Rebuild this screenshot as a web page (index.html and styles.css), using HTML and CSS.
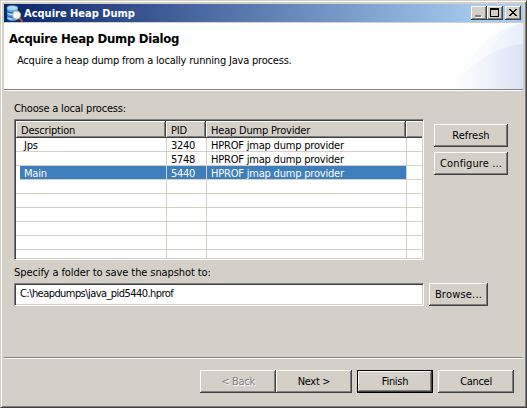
FILE: index.html
```html
<!DOCTYPE html>
<html lang="en">
<head>
<meta charset="utf-8">
<title>Acquire Heap Dump</title>
<link rel="stylesheet" href="styles.css">
</head>
<body>
<div class="window">
  <header class="titlebar">
    <svg class="app-icon" width="17" height="17" viewBox="0 0 16 16">
      <path d="M1 2.500v10c0 1.700 2.300 2.500 5 2.500s5-.8 5-2.500v-10z" fill="#5da7e2"/>
      <path d="M1 5.500c1 2.600 9 2.600 10 0M1 9.500c1 2.600 9 2.600 10 0" fill="none" stroke="#2869b5" stroke-width="1.300"/>
      <path d="M2 7.800c1 1 4 1.400 5 1M2 11.800c1 1 3 1.400 4 1.200" fill="none" stroke="#b6e1fa"/>
      <ellipse cx="6" cy="2.800" rx="5" ry="2.200" fill="#aadcf8" stroke="#64a8df" stroke-width=".7"/>
      <path d="M12.600 12.300l3 3.200" stroke="#a45d24" stroke-width="1.900"/>
      <circle cx="10" cy="9.500" r="3.700" fill="#edf7ff" stroke="#d1b17e" stroke-width="1.100"/>
    </svg>
    <h1 class="title">Acquire Heap Dump</h1>
    <div class="controls">
      <span class="ctl"><svg width="16" height="14" shape-rendering="crispEdges"><path d="M5 10h6v2H5z" fill="#fff"/><path d="M4 9h6v2H4z" fill="#808080"/></svg></span>
      <span class="ctl"><svg width="16" height="14" shape-rendering="crispEdges"><path d="M3 2h9v9H3zM4 4v6h7V4z" fill="#000" fill-rule="evenodd"/></svg></span>
      <span class="ctl close"><svg width="16" height="14" shape-rendering="crispEdges"><path d="M4 3h2v1h1v1h2V4h1V3h2v1h-1v1h-1v1H9v1h1v1h1v1h1v1h-2V9H9V8H7v1H6v1H4V9h1V8h1V7h1V6H6V5H5V4H4z" fill="#000"/></svg></span>
    </div>
  </header>

  <section class="banner">
    <svg class="swoosh" width="83" height="66" viewBox="0 0 83 66">
      <defs>
        <linearGradient id="g1" x1="0" x2="1"><stop offset="0" stop-color="#fff"/><stop offset=".5" stop-color="#f8fafe"/><stop offset="1" stop-color="#eef3fc"/></linearGradient>
        <linearGradient id="g2" x1="0" x2="1"><stop offset="0" stop-color="#f7f9fe"/><stop offset="1" stop-color="#e7eefb"/></linearGradient>
        <linearGradient id="g3" x1="0" x2="1"><stop offset="0" stop-color="#fff"/><stop offset=".45" stop-color="#f1f4fc"/><stop offset="1" stop-color="#dbe2f6"/></linearGradient>
      </defs>
      <path d="M11 66C26 35 51 5 83 0v66z" fill="url(#g1)"/>
      <path d="M41 46C50 22 64 4 83 0v46z" fill="url(#g2)"/>
      <path d="M11 66C27 43 55 23 83 21v45z" fill="url(#g3)"/>
    </svg>
    <h2 class="heading">Acquire Heap Dump Dialog</h2>
    <p class="desc">Acquire a heap dump from a locally running Java process.</p>
  </section>

  <main class="content">
    <label class="label choose">Choose a local process:</label>
    <div class="process-row">
      <div class="table">
        <div class="thead">
          <span class="th">Description</span><span class="th">PID</span><span class="th">Heap Dump Provider</span><span class="th last"></span>
        </div>
        <div class="tr"><span class="name">Jps</span><span class="pid">3240</span><span>HPROF jmap dump provider</span><span></span></div>
        <div class="tr"><span class="name"></span><span class="pid">5748</span><span>HPROF jmap dump provider</span><span></span></div>
        <div class="tr selected"><span class="name">Main</span><span class="pid">5440</span><span>HPROF jmap dump provider</span><span></span></div>
        <div class="tr"><span></span><span></span><span></span><span></span></div>
        <div class="tr"><span></span><span></span><span></span><span></span></div>
        <div class="tr"><span></span><span></span><span></span><span></span></div>
        <div class="tr"><span></span><span></span><span></span><span></span></div>
        <div class="tr"><span></span><span></span><span></span><span></span></div>
        <div class="tr"><span></span><span></span><span></span><span></span></div>
      </div>
      <div class="side">
        <button class="btn">Refresh</button>
        <button class="btn wide-text">Configure ...</button>
      </div>
    </div>
    <label class="label specify">Specify a folder to save the snapshot to:</label>
    <div class="path-row">
      <div class="field">C:\heapdumps\java_pid5440.hprof</div>
      <button class="btn browse">Browse...</button>
    </div>
  </main>

  <footer class="footer">
    <button class="btn disabled">&lt; Back</button>
    <button class="btn">Next &gt;</button>
    <button class="btn default">Finish</button>
    <button class="btn cancel">Cancel</button>
  </footer>
</div>
</body>
</html>
```
FILE: styles.css
```css
* { box-sizing: border-box; }

body {
  margin: 0;
  background: #d4d0c8;
  color: #000;
  font: 11px/14px "DejaVu Sans Condensed", "DejaVu Sans", sans-serif;
  letter-spacing: -0.2px;
}

.window {
  width: 527px;
  height: 408px;
  padding: 3px 2px 2px 3px;
  border: 1px solid #d4d0c8;
  border-right-color: #404040;
  border-bottom-color: #404040;
  box-shadow: inset 1px 1px #fff, inset -1px -1px #808080;
  display: flex;
  flex-direction: column;
}

.titlebar {
  width: 519px;
  height: 18px;
  display: flex;
  align-items: center;
  padding: 0 2px;
  background: linear-gradient(90deg, #0a246a, #a6caf0 92%);
}

.app-icon { margin-top: 1px; }

.title {
  margin: 0 auto 0 1px;
  padding-top: 2px;
  color: #fff;
  font-size: 11px;
  font-weight: bold;
  letter-spacing: 0;
}

.controls { display: flex; }

.ctl {
  width: 16px;
  height: 14px;
  background: #d4d0c8;
  box-shadow: inset -1px -1px #404040, inset 1px 1px #fff, inset -2px -2px #808080;
}

.ctl svg { display: block; }
.close { margin-left: 2px; }

.banner {
  position: relative;
  width: 519px;
  height: 68px;
  margin-top: 1px;
  padding: 8px 0 0 5px;
  background: #fff;
  border-bottom: 1px solid #fff;
  box-shadow: inset 0 -1px #808080;
}

.swoosh { position: absolute; right: 0; top: 0; }

.heading {
  position: relative;
  margin: 0;
  font-size: 13px;
  line-height: 16px;
  letter-spacing: -0.3px;
}

.desc { position: relative; margin: 7px 0 0 8px; }

.content { padding: 11px 0 0 10px; }
.label { display: block; }
.choose { height: 17px; }

.process-row { display: flex; gap: 10px; }

.table {
  width: 410px;
  height: 141px;
  background: #fff;
  border: 1px solid;
  border-color: #808080 #fff #fff #808080;
  box-shadow: inset 1px 1px #404040, inset -1px -1px #d4d0c8;
  padding: 1px;
}

.thead, .tr {
  display: grid;
  grid-template-columns: 151px 40px 200px 15px;
}

.thead {
  height: 17px;
  grid-template-columns: 150px 40px 200px 16px;
}

.th {
  padding: 3px 0 0 5px;
  background: #d4d0c8;
  box-shadow: inset -1px -1px #404040, inset 1px 1px #fff, inset -2px -2px #808080;
}

.th.last { box-shadow: inset 0 -1px #404040, inset 1px 1px #fff, inset 0 -2px #808080; }

.tr { height: 14px; line-height: 15px; }

.tr > span {
  height: 14px;
  padding-left: 4px;
  border-right: 1px solid #d4d0c8;
  border-bottom: 1px solid #d4d0c8;
  white-space: nowrap;
}

.tr > span:last-child { border-right: 0; }
.tr:last-child { height: 9px; }
.tr:last-child > span { height: 9px; border-bottom: 0; }
.tr > .name { padding-left: 8px; }
.pid { letter-spacing: -0.3px; }
.selected { color: #fff; }
.selected > span:not(:last-child) { background: #3d7ebc; }
.selected > .name { margin-left: 4px; padding-left: 4px; }

.side {
  display: flex;
  flex-direction: column;
  gap: 5px;
  padding-top: 5px;
}

.btn {
  width: 74px;
  height: 23px;
  padding: 1px 0 0;
  border: 0;
  color: #000;
  background: #d4d0c8;
  font: inherit;
  letter-spacing: 0;
  box-shadow: inset -1px -1px #404040, inset 1px 1px #fff, inset -2px -2px #808080;
}

.wide-text { letter-spacing: 0.1px; }
.specify { margin-top: 6px; height: 17px; letter-spacing: -0.09px; }

.path-row { display: flex; gap: 5px; }

.field {
  width: 410px;
  height: 23px;
  padding: 3px 5px;
  background: #fff;
  border: 1px solid;
  border-color: #808080 #fff #fff #808080;
  box-shadow: inset 1px 1px #404040, inset -1px -1px #d4d0c8;
  line-height: 14px;
  letter-spacing: -0.56px;
}

.browse { width: 59px; letter-spacing: 0.2px; }

.footer {
  width: 519px;
  height: 48px;
  margin-top: auto;
  padding: 12px 9px 0 0;
  border-top: 1px solid #808080;
  box-shadow: inset 0 1px #fff;
  display: flex;
  justify-content: flex-end;
}

.footer .btn { width: 76px; letter-spacing: -0.3px; }
.footer .disabled { color: #808080; text-shadow: 1px 1px #fff; }
.footer .default {
  margin: 0 5px;
  box-shadow: inset 0 0 0 1px #000, inset -2px -2px #404040, inset 2px 2px #fff, inset -3px -3px #808080;
}
```
